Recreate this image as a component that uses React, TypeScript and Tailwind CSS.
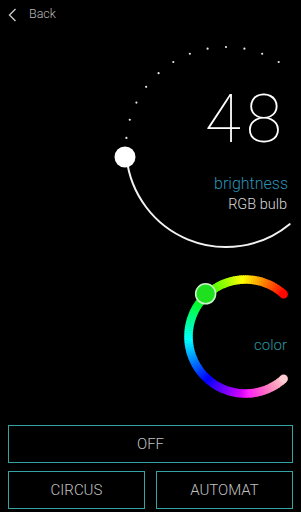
import React from "react";

const rad = (d: number) => (d * Math.PI) / 180;
const pt = (cx: number, cy: number, r: number, d: number) => [cx + r * Math.cos(rad(d)), cy + r * Math.sin(rad(d))];

function Dial() {
  const cx = 226, cy = 147, r = 100;
  const [sx, sy] = pt(cx, cy, r, 174);
  const [ex, ey] = pt(cx, cy, r, 50.5);
  const dots = [] as React.ReactNode[];
  for (let k = -8; k <= 3; k++) {
    const [x, y] = pt(cx, cy, r, 270 + k * 10.6);
    dots.push(<circle key={k} cx={x} cy={y} r={1.1} fill="#e8e8e8" />);
  }
  const ccx = 245.5, ccy = 336.5, cr = 57;
  const segs = [] as React.ReactNode[];
  const colorAt = (t: number) => {
    const hue = (312 - t) * 1.333;
    let light = 50;
    if (t < 95) light = 50 + ((95 - t) / 47) * 40;
    return `hsl(${hue}, 100%, ${light}%)`;
  };
  for (let t = 48; t < 312; t += 2) {
    const a0 = t, a1 = Math.min(t + 2.6, 312);
    const [x0, y0] = pt(ccx, ccy, cr, a0);
    const [x1, y1] = pt(ccx, ccy, cr, a1);
    segs.push(
      <path key={t} d={`M${x0} ${y0} A${cr} ${cr} 0 0 1 ${x1} ${y1}`} stroke={colorAt(t + 1)} strokeWidth={8.5} fill="none" />
    );
  }
  const [c0x, c0y] = pt(ccx, ccy, cr, 48);
  const [c1x, c1y] = pt(ccx, ccy, cr, 312);
  const [kx, ky] = pt(ccx, ccy, cr, 227);
  return (
    <svg className="absolute inset-0" width={301} height={395} viewBox="0 30 301 395">
      {dots}
      <path d={`M${sx} ${sy} A${r} ${r} 0 0 0 ${ex} ${ey}`} stroke="#f2f2f2" strokeWidth={2} fill="none" strokeLinecap="round" />
      <circle cx={125} cy={157} r={10.5} fill="#ffffff" />
      {segs}
      <circle cx={c0x} cy={c0y} r={4.25} fill={colorAt(48)} />
      <circle cx={c1x} cy={c1y} r={4.25} fill={colorAt(311)} />
      <circle cx={kx - 1} cy={ky - 1} r={10} fill="#1fe01f" stroke="#c9f3c9" strokeWidth={1.5} />
    </svg>
  );
}

export default function App() {
  return (
    <div className="w-[301px] h-[512px] bg-black flex flex-col overflow-hidden" style={{ fontFamily: "Roboto, 'Liberation Sans', sans-serif" }}>
      <div className="h-[30px] flex items-center pl-[8px] pb-[1px]">
        <svg width="9" height="14" viewBox="0 0 9 14" className="mr-[12px]">
          <path d="M7.5 1 L1.5 7 L7.5 13" stroke="#c8c8c8" strokeWidth="1.4" fill="none" />
        </svg>
        <span className="text-[12.5px] font-light text-[#b8b8b8] leading-none">Back</span>
      </div>
      <div className="relative flex-1">
        <Dial />
        <div className="absolute right-[14px] top-[57px] text-[66px] font-thin text-white leading-none tracking-[5px]">48</div>
        <div className="absolute right-[13px] top-[146px] text-[16px] font-light text-[#2b92b5] leading-none">brightness</div>
        <div className="absolute right-[14px] top-[168px] text-[14.5px] font-light text-[#d8d8d8] leading-none">RGB bulb</div>
        <div className="absolute right-[14px] top-[308px] text-[15px] font-light text-[#2d95a0] leading-none">color</div>
      </div>
      <div className="px-[8px] pb-[3px] flex flex-col gap-[8px]">
        <div className="h-[38px] border border-[#35a3a3] flex items-center justify-center text-[15px] font-light text-[#c0c0c0]">OFF</div>
        <div className="grid grid-cols-2 gap-[11px]">
          <div className="h-[38px] border border-[#35a3a3] flex items-center justify-center text-[15px] font-light text-[#c0c0c0]">CIRCUS</div>
          <div className="h-[38px] border border-[#35a3a3] flex items-center justify-center text-[15px] font-light text-[#c0c0c0]">AUTOMAT</div>
        </div>
      </div>
    </div>
  );
}
